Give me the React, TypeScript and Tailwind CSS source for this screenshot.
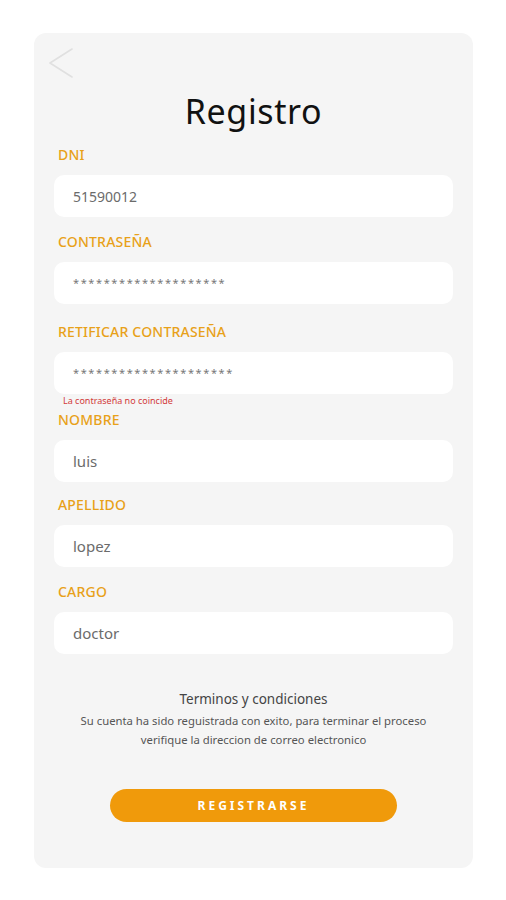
type FieldProps = {
  label: string;
  value: string;
  className?: string;
  valueClass?: string;
};

function Field({
  label,
  value,
  className = "",
  valueClass = "text-[15px] text-[#6b6b6b]",
}: FieldProps) {
  return (
    <div className={className}>
      <p className="pl-[4px] text-[14px] font-medium leading-5 tracking-[0.2px] text-[#e8a119]">
        {label}
      </p>
      <div className="mt-[10px] flex h-[42px] items-center rounded-[10px] bg-white px-[19px]">
        <span className={valueClass}>{value}</span>
      </div>
    </div>
  );
}

const secret = "text-[11px] tracking-[1.6px] text-[#777]";

export default function App() {
  return (
    <div
      className="min-h-[900px] bg-white px-[34px] pt-[33px]"
      style={{ fontFamily: '"Noto Sans", "Open Sans", sans-serif' }}
    >
      <div className="h-[835px] w-[439px] rounded-[12px] bg-[#f5f5f5] px-[20px] pt-[15px]">
        <svg
          width="26"
          height="32"
          viewBox="0 0 26 32"
          fill="none"
          className="-ml-[6px]"
        >
          <polyline
            points="24,1 2,15 24,29"
            stroke="#e0e0e0"
            strokeWidth="1.6"
            strokeLinecap="round"
            strokeLinejoin="round"
          />
        </svg>
        <h1 className="mt-[11px] text-center text-[34px] leading-10 tracking-[0.6px] text-[#111]">
          Registro
        </h1>

        <Field
          className="mt-[14px]"
          label="DNI"
          value="51590012"
          valueClass="text-[14px] text-[#6b6b6b]"
        />
        <Field
          className="mt-[15px]"
          label="CONTRASEÑA"
          value="********************"
          valueClass={secret}
        />
        <Field
          className="mt-[18px]"
          label="RETIFICAR CONTRASEÑA"
          value="*********************"
          valueClass={secret}
        />
        <p className="mt-[1px] pl-[9px] text-[9px] leading-[12px] text-[#d23a3a]">
          La contraseña no coincide
        </p>
        <Field className="mt-[3px]" label="NOMBRE" value="luis" />
        <Field className="mt-[13px]" label="APELLIDO" value="lopez" />
        <Field className="mt-[15px]" label="CARGO" value="doctor" />

        <div className="mt-[35px] text-center">
          <p className="text-[13.5px] leading-5 text-[#444]">
            Terminos y condiciones
          </p>
          <p className="mt-[2px] text-[11.3px] leading-[19px] text-[#555]">
            Su cuenta ha sido reguistrada con exito, para terminar el proceso
            <br />
            verifique la direccion de correo electronico
          </p>
        </div>

        <div className="mt-[40px] flex justify-center">
          <button className="h-[33px] w-[287px] rounded-full bg-[#f09a0b] text-[12px] font-bold tracking-[3px] text-white">
            REGISTRARSE
          </button>
        </div>
      </div>
    </div>
  );
}
